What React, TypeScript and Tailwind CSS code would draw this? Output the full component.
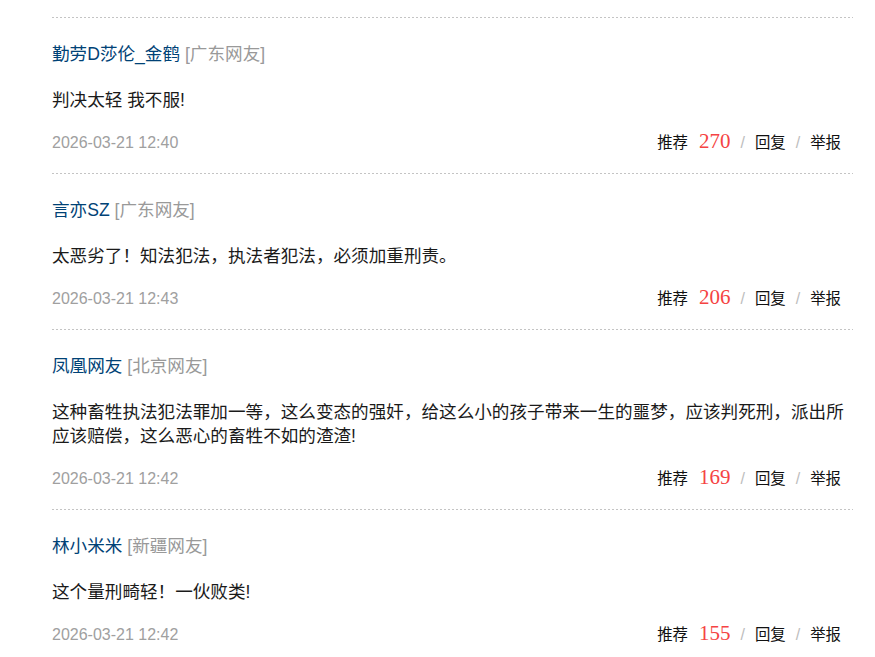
import React from "react";

interface Comment {
  id: number;
  name: string;
  location: string;
  content: string;
  time: string;
  likes: number;
}

const comments: Comment[] = [
  {
    id: 1,
    name: "勤劳D莎伦_金鹤",
    location: "广东网友",
    content: "判决太轻 我不服!",
    time: "2026-03-21 12:40",
    likes: 270,
  },
  {
    id: 2,
    name: "言亦SZ",
    location: "广东网友",
    content: "太恶劣了！知法犯法，执法者犯法，必须加重刑责。",
    time: "2026-03-21 12:43",
    likes: 206,
  },
  {
    id: 3,
    name: "凤凰网友",
    location: "北京网友",
    content:
      "这种畜牲执法犯法罪加一等，这么变态的强奸，给这么小的孩子带来一生的噩梦，应该判死刑，派出所应该赔偿，这么恶心的畜牲不如的渣渣!",
    time: "2026-03-21 12:42",
    likes: 169,
  },
  {
    id: 4,
    name: "林小米米",
    location: "新疆网友",
    content: "这个量刑畸轻！一伙败类!",
    time: "2026-03-21 12:42",
    likes: 155,
  },
];

function CommentItem({ comment }: { comment: Comment }) {
  return (
    <div>
      <div className="h-px bg-[linear-gradient(to_right,#c4c4c4_50%,transparent_50%)] bg-[length:4px_1px] bg-repeat-x" />
      <div className="pt-[24px] pb-[20px]">
        <div className="text-[17.6px] leading-[24px]">
          <span className="text-[#004276]">{comment.name}</span>{" "}
          <span className="text-[#999999]">[{comment.location}]</span>
        </div>
        <p className="mt-[22px] text-[17.6px] leading-[24px] text-[#1a1a1a]">
          {comment.content}
        </p>
        <div className="mt-[17px] flex items-baseline justify-between h-[24px] leading-[24px] pr-[12px]">
          <span className="text-[16px] text-[#a0a0a0]">{comment.time}</span>
          <div className="flex items-baseline text-[15.4px] text-[#111111]">
            <span className="mr-[11px] cursor-pointer">推荐</span>
            <span className="font-['Georgia','Liberation_Serif',serif] text-[21px] text-[#f54343]">
              {comment.likes}
            </span>
            <span className="mx-[10px] text-[16px] text-[#bdbdbd]">/</span>
            <span className="cursor-pointer">回复</span>
            <span className="mx-[10px] text-[16px] text-[#bdbdbd]">/</span>
            <span className="cursor-pointer">举报</span>
          </div>
        </div>
      </div>
    </div>
  );
}

export default function App() {
  return (
    <div className="min-h-screen bg-white font-['Liberation_Sans','Noto_Sans_CJK_SC',sans-serif]">
      <div className="ml-[52px] w-[801px] pt-[17px]">
        {comments.map((c) => (
          <CommentItem key={c.id} comment={c} />
        ))}
      </div>
    </div>
  );
}
